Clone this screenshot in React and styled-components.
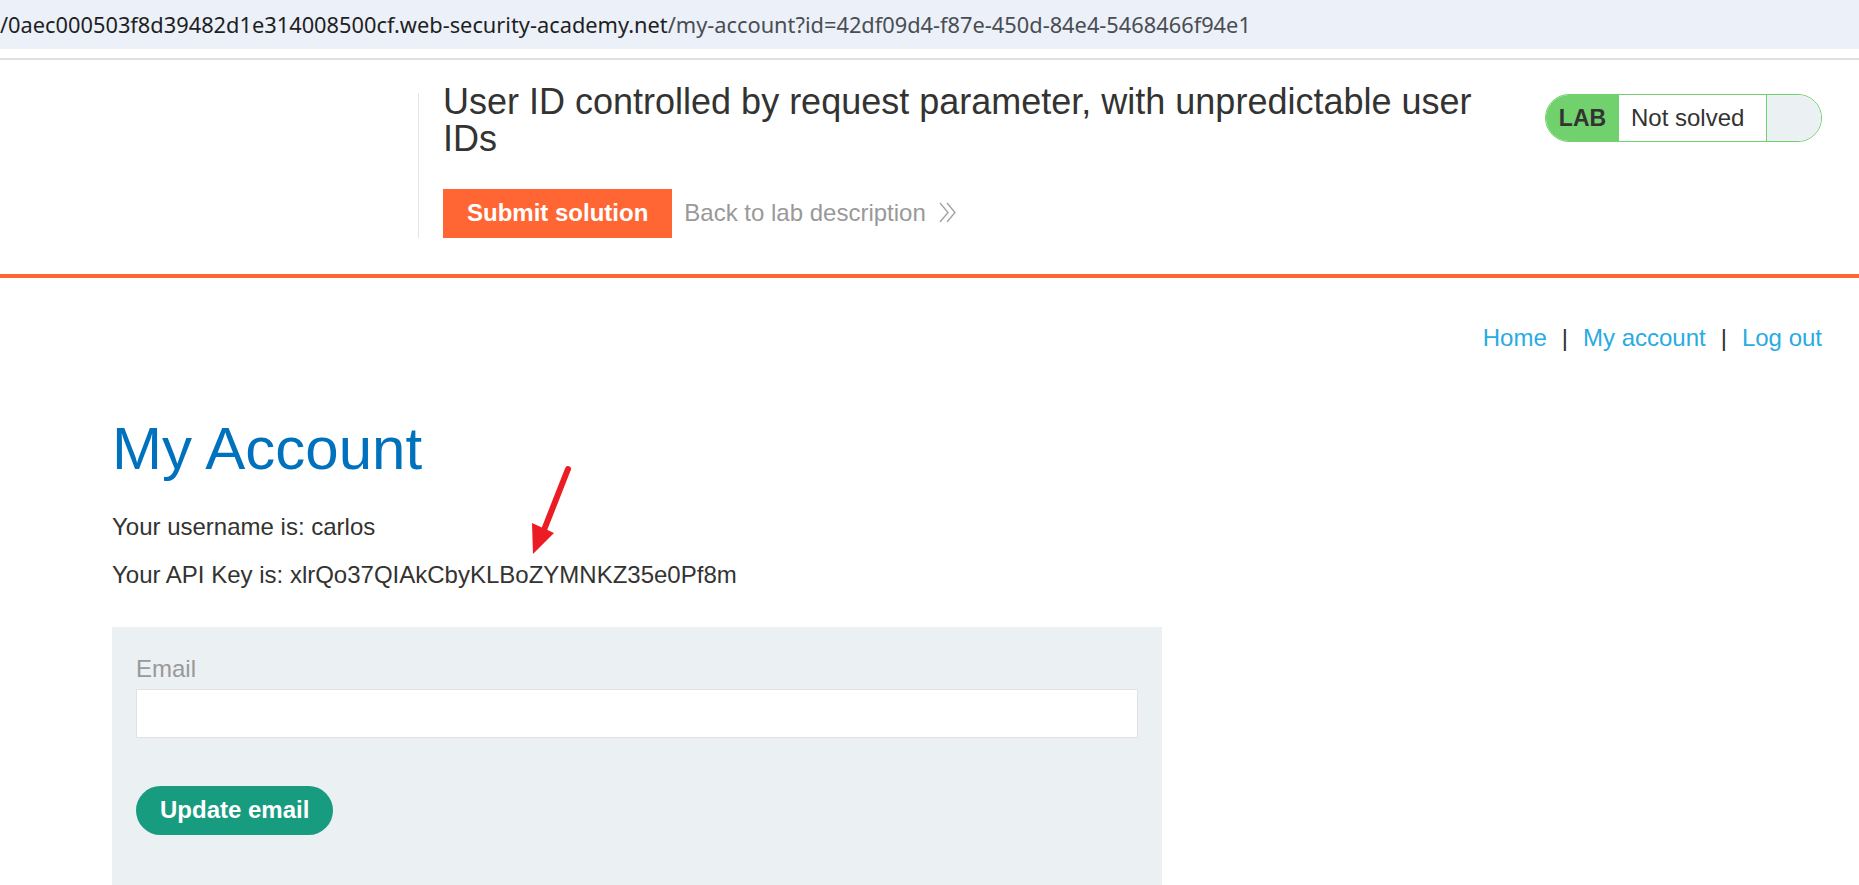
import React from "react";
import styled, { createGlobalStyle } from "styled-components";

const GlobalStyle = createGlobalStyle`
  html, body {
    margin: 0;
    padding: 0;
    background: #ffffff;
  }
  body {
    font-family: "Liberation Sans", Arial, sans-serif;
    color: #333332;
    overflow: hidden;
  }
`;

const Page = styled.div`
  position: relative;
  width: 1859px;
  height: 885px;
  overflow: hidden;
`;

const AddressBar = styled.div`
  display: flex;
  align-items: center;
  height: 49px;
  background: #ebf0f9;
  font-family: "Noto Sans", "Open Sans", sans-serif;
  font-size: 21.8px;
  white-space: nowrap;
  border-bottom: 9px solid #ffffff;
`;

const UrlText = styled.span`
  color: ${(props) => (props.dim ? "#4a4d52" : "#1f1f1f")};
`;

const ChromeLine = styled.div`
  height: 2px;
  background: #e0e0e0;
`;

const LabHeader = styled.header`
  display: flex;
  align-items: flex-start;
  padding: 33px 37px 36px 418px;
  border-bottom: 4px solid #ff6633;
`;

const TitleBlock = styled.div`
  flex: 1;
  border-left: 1px solid #e4e4e4;
  padding-left: 24px;
  height: 145px;
`;

const LabTitle = styled.h2`
  margin: -10px 0 0;
  max-width: 1060px;
  font-size: 36px;
  line-height: 37px;
  font-weight: normal;
  color: #333332;
`;

const ActionRow = styled.div`
  display: flex;
  align-items: center;
  margin-top: 32px;
`;

const SubmitButton = styled.button`
  height: 49px;
  padding: 0 24px 2px;
  border: none;
  background: #ff6633;
  color: #ffffff;
  font-family: "Liberation Sans", Arial, sans-serif;
  font-size: 24px;
  font-weight: bold;
`;

const BackLink = styled.a`
  display: flex;
  align-items: center;
  gap: 13px;
  margin-left: 12px;
  margin-top: -2px;
  color: #999999;
  font-size: 24px;
  text-decoration: none;
`;

const StatusBadge = styled.div`
  display: flex;
  height: 48px;
  margin-top: 1px;
  border: 1px solid #70d16d;
  border-radius: 25px;
  overflow: hidden;
  box-sizing: border-box;
`;

const BadgeLabel = styled.span`
  display: flex;
  align-items: center;
  width: 73px;
  justify-content: center;
  background: #70d16d;
  color: #333332;
  font-size: 23px;
  font-weight: bold;
`;

const BadgeStatus = styled.span`
  display: flex;
  align-items: center;
  width: 147px;
  padding-left: 12px;
  box-sizing: border-box;
  background: #ffffff;
  color: #333332;
  font-size: 24px;
`;

const BadgeTail = styled.span`
  width: 54px;
  background: #ebf0f2;
  border-left: 1px solid #70d16d;
`;

const Main = styled.main`
  padding: 46px 37px 0 112px;
`;

const TopNav = styled.nav`
  display: flex;
  justify-content: flex-end;
  font-size: 24px;
`;

const NavLink = styled.a`
  color: #29abe2;
  text-decoration: none;
`;

const NavSep = styled.span`
  margin: 0 15px;
  color: #333332;
`;

const Heading = styled.h1`
  margin: 62px 0 28px;
  font-size: 60px;
  line-height: 1.18;
  font-weight: normal;
  color: #0071bc;
`;

const Info = styled.p`
  margin: 0 0 20px;
  font-size: 24px;
  color: #333332;
`;

const EmailForm = styled.form`
  width: 1050px;
  margin-top: 38px;
  padding: 28px 24px 80px;
  box-sizing: border-box;
  background: #ebf0f2;
`;

const FieldLabel = styled.label`
  display: block;
  font-size: 24px;
  color: #999999;
`;

const TextInput = styled.input`
  display: block;
  width: 100%;
  height: 49px;
  margin-top: 6px;
  border: 1px solid #e2e2e2;
  background: #ffffff;
  box-sizing: border-box;
`;

const UpdateButton = styled.button`
  height: 49px;
  margin-top: 48px;
  padding: 0 24px;
  border: none;
  border-radius: 25px;
  background: #189c80;
  color: #ffffff;
  font-family: "Liberation Sans", Arial, sans-serif;
  font-size: 24px;
  font-weight: bold;
`;

const Annotation = styled.svg`
  position: absolute;
  left: 525px;
  top: 460px;
`;

function DoubleChevron() {
  return (
    <svg width="18" height="21" viewBox="0 0 18 21" fill="none">
      <polyline points="1,1 9,10.5 1,20" stroke="#a0a0a0" strokeWidth="1.3" />
      <polyline points="8,1 16,10.5 8,20" stroke="#a0a0a0" strokeWidth="1.3" />
    </svg>
  );
}

export default function App() {
  return (
    <Page>
      <GlobalStyle />
      <AddressBar>
        <UrlText>/0aec000503f8d39482d1e314008500cf.web-security-academy.net</UrlText>
        <UrlText dim>/my-account?id=42df09d4-f87e-450d-84e4-5468466f94e1</UrlText>
      </AddressBar>
      <ChromeLine />
      <LabHeader>
        <TitleBlock>
          <LabTitle>User ID controlled by request parameter, with unpredictable user IDs</LabTitle>
          <ActionRow>
            <SubmitButton>Submit solution</SubmitButton>
            <BackLink href="#">
              Back to lab description
              <DoubleChevron />
            </BackLink>
          </ActionRow>
        </TitleBlock>
        <StatusBadge>
          <BadgeLabel>LAB</BadgeLabel>
          <BadgeStatus>Not solved</BadgeStatus>
          <BadgeTail />
        </StatusBadge>
      </LabHeader>
      <Main>
        <TopNav>
          <NavLink href="#">Home</NavLink>
          <NavSep>|</NavSep>
          <NavLink href="#">My account</NavLink>
          <NavSep>|</NavSep>
          <NavLink href="#">Log out</NavLink>
        </TopNav>
        <Heading>My Account</Heading>
        <Info>Your username is: carlos</Info>
        <Info>Your API Key is: xlrQo37QIAkCbyKLBoZYMNKZ35e0Pf8m</Info>
        <EmailForm onSubmit={(e) => e.preventDefault()}>
          <FieldLabel>Email</FieldLabel>
          <TextInput type="email" />
          <UpdateButton type="submit">Update email</UpdateButton>
        </EmailForm>
      </Main>
      <Annotation width="50" height="100" viewBox="0 0 50 100">
        <line x1="43" y1="9" x2="19" y2="70" stroke="#ec1c24" strokeWidth="6" strokeLinecap="round" />
        <polygon points="7,63 8,94 29,73" fill="#ec1c24" />
      </Annotation>
    </Page>
  );
}
